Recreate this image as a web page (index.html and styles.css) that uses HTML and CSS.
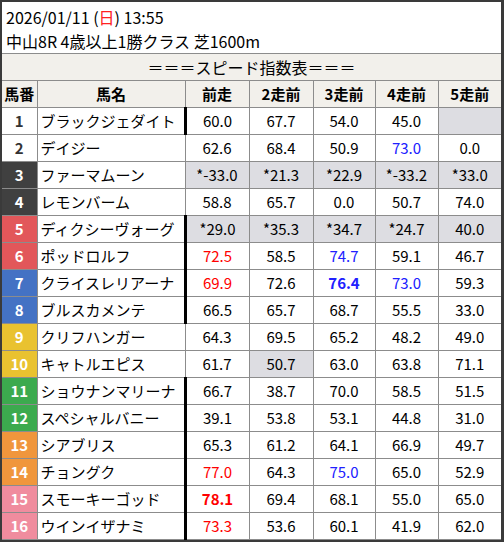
FILE: index.html
```html
<!DOCTYPE html>
<html lang="ja">
<head>
<meta charset="utf-8">
<link rel="stylesheet" href="styles.css">
</head>
<body>
<div class="frame">
  <div class="title">
    <div class="line">2026/01/11 (<span class="sun">日</span>) 13:55</div>
    <div class="line">中山8R 4歳以上1勝クラス 芝1600m</div>
  </div>
  <table class="sheet">
    <colgroup>
      <col class="c-no"><col class="c-name"><col class="c-v1"><col class="c-v2"><col class="c-v3"><col class="c-v4"><col class="c-v5">
    </colgroup>
    <tr class="band"><td colspan="7">＝＝＝スピード指数表＝＝＝</td></tr>
    <tr class="head"><td>馬番</td><td>馬名</td><td>前走</td><td>2走前</td><td>3走前</td><td>4走前</td><td>5走前</td></tr>
    <tr><td class="no w1">1</td><td class="name thick">ブラックジェダイト</td><td>60.0</td><td>67.7</td><td>54.0</td><td>45.0</td><td class="g"></td></tr>
    <tr><td class="no w1">2</td><td class="name">デイジー</td><td>62.6</td><td>68.4</td><td>50.9</td><td class="b">73.0</td><td>0.0</td></tr>
    <tr><td class="no w2">3</td><td class="name">ファーマムーン</td><td class="g">*-33.0</td><td class="g">*21.3</td><td class="g">*22.9</td><td class="g">*-33.2</td><td class="g">*33.0</td></tr>
    <tr><td class="no w2">4</td><td class="name">レモンバーム</td><td>58.8</td><td>65.7</td><td>0.0</td><td>50.7</td><td>74.0</td></tr>
    <tr><td class="no w3">5</td><td class="name thick">ディクシーヴォーグ</td><td class="g">*29.0</td><td class="g">*35.3</td><td class="g">*34.7</td><td class="g">*24.7</td><td class="g">40.0</td></tr>
    <tr><td class="no w3">6</td><td class="name thick">ポッドロルフ</td><td class="r">72.5</td><td>58.5</td><td class="b">74.7</td><td>59.1</td><td>46.7</td></tr>
    <tr><td class="no w4">7</td><td class="name thick">クライスレリアーナ</td><td class="r">69.9</td><td>72.6</td><td class="b bold">76.4</td><td class="b">73.0</td><td>59.3</td></tr>
    <tr><td class="no w4">8</td><td class="name thick">ブルスカメンテ</td><td>66.5</td><td>65.7</td><td>68.7</td><td>55.5</td><td>33.0</td></tr>
    <tr><td class="no w5">9</td><td class="name">クリフハンガー</td><td>64.3</td><td>69.5</td><td>65.2</td><td>48.2</td><td>49.0</td></tr>
    <tr><td class="no w5">10</td><td class="name">キャトルエピス</td><td>61.7</td><td class="g">50.7</td><td>63.0</td><td>63.8</td><td>71.1</td></tr>
    <tr><td class="no w6">11</td><td class="name thick">ショウナンマリーナ</td><td>66.7</td><td>38.7</td><td>70.0</td><td>58.5</td><td>51.5</td></tr>
    <tr><td class="no w6">12</td><td class="name thick">スペシャルバニー</td><td>39.1</td><td>53.8</td><td>53.1</td><td>44.8</td><td>31.0</td></tr>
    <tr><td class="no w7">13</td><td class="name thick">シアブリス</td><td>65.3</td><td>61.2</td><td>64.1</td><td>66.9</td><td>49.7</td></tr>
    <tr><td class="no w7">14</td><td class="name thick">チョングク</td><td class="r">77.0</td><td>64.3</td><td class="b">75.0</td><td>65.0</td><td>52.9</td></tr>
    <tr><td class="no w8">15</td><td class="name thick">スモーキーゴッド</td><td class="r bold">78.1</td><td>69.4</td><td>68.1</td><td>55.0</td><td>65.0</td></tr>
    <tr><td class="no w8">16</td><td class="name thick">ウインイザナミ</td><td class="r">73.3</td><td>53.6</td><td>60.1</td><td>41.9</td><td>62.0</td></tr>
  </table>
</div>
</body>
</html>
```
FILE: styles.css
```css
html, body {
  margin: 0;
  padding: 0;
  background: #fff;
}
body {
  font-family: "Noto Sans CJK JP", "Noto Sans", sans-serif;
  color: #000;
}
.frame {
  width: 499px;
  height: 538px;
  border-style: solid;
  border-color: #3a3a3a;
  border-width: 2px 3px 2px 2px;
  background: #fff;
  overflow: hidden;
}
.title {
  height: 51px;
  box-sizing: border-box;
  padding: 3px 0 0 4px;
}
.title .line {
  font-size: 16px;
  line-height: 24px;
  height: 24px;
  white-space: nowrap;
}
.sun { color: #ff2020; }
.sheet {
  border-collapse: collapse;
  table-layout: fixed;
  width: 499px;
  font-size: 15px;
}
.c-no { width: 35px; }
.c-name { width: 148px; }
.c-v1 { width: 64px; }
.c-v2 { width: 64px; }
.c-v3 { width: 62px; }
.c-v4 { width: 63px; }
.c-v5 { width: 63px; }
.sheet td {
  border: 1px solid #8c8c8c;
  height: 26px;
  padding: 0;
  text-align: center;
  vertical-align: middle;
  line-height: 20px;
  white-space: nowrap;
  overflow: hidden;
}
.sheet tr td:first-child { border-left: none; }
.sheet tr td:last-child { border-right: none; }
.band td {
  background: #f2f0eb;
  border-top: 1px solid #8c8c8c;
  font-size: 16px;
}
.head td {
  background: #f2f0eb;
  font-weight: bold;
}
.sheet td.name {
  text-align: left;
  padding-left: 3px;
}
.sheet td.thick { border-right: 3px solid #000; }
.no { font-weight: bold; color: #fff; }
.w1 { background: #fff; color: #333; }
.w2 { background: #404040; }
.w3 { background: #e2575a; }
.w4 { background: #4472c4; }
.w5 { background: #e9c230; }
.w6 { background: #3caa4e; }
.w7 { background: #f0963c; }
.w8 { background: #f08c9e; }
.g { background: #dddde2; }
.r { color: #ff0000; }
.b { color: #2020ff; }
.bold { font-weight: bold; }
```
